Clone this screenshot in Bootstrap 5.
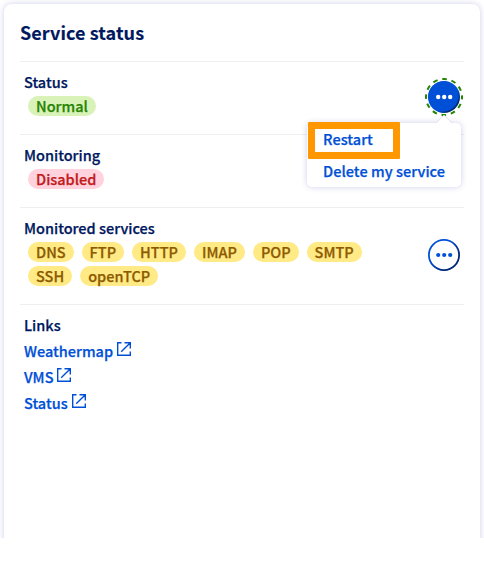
<!DOCTYPE html>
<html lang="en">
<head>
<meta charset="utf-8">
<meta name="viewport" content="width=device-width, initial-scale=1">
<title>Service status</title>
<link rel="stylesheet" href="https://cdn.jsdelivr.net/npm/bootstrap@5.3.0/dist/css/bootstrap.min.css">
<style>
body { font-family: "Noto Sans CJK SC", "Noto Sans", sans-serif; font-size: 14.5px; font-weight: 500; color: #00185e; background: #fff; -webkit-text-stroke: .25px currentColor; }
.viewport-area { height: 538px; padding: 4px 4px 0; }
.status-card { height: 560px; border: 0; border-radius: 8px; color: #00185e; padding: 0 16px; box-shadow: 0 0 6px rgba(0, 14, 156, .2); }
.card-heading { height: 57px; padding-top: 16px; font-size: 18px; letter-spacing: .08px; line-height: 24px; font-weight: 700; -webkit-text-stroke: .15px currentColor; }
.tile { border-top: 1px solid #efefef; height: 73px; padding: 8px 4px 0; }
.tile-services { height: 97px; }
.tile-name { line-height: 24px; height: 26px; }
.chips { gap: 4px 8px; padding-left: 4px; width: 350px; }
.chip { height: 20px; line-height: 20px; padding: 0 8px; border-radius: 10px; font-size: 14.5px; }
.chip-ok { background: #d9f2b8; color: #268403; }
.chip-off { background: #ffd2dd; color: #c11b1b; }
.chip-on { background: #ffea85; color: #8d5a00; }
.action { width: 32px; height: 32px; padding: 0; border: 0; background: none; display: block; }
.action svg { display: block; overflow: visible; }
.action-holder { margin-top: 11px; }
.action-services { margin-top: 23px; }
.action-menu { top: 42px; right: -1px; width: 154px; height: 64px; background: #fff; border-radius: 5px; box-shadow: 0 0 6px rgba(0, 14, 156, .2); z-index: 3; }
.menu-tip { top: -8px; right: 9px; }
.menu-entry { height: 32px; line-height: 32px; padding-left: 16px; color: #0050d7; text-decoration: none; white-space: nowrap; letter-spacing: .04px; }
.highlight-box { left: 1px; top: -1px; width: 92px; height: 37px; border: 7px solid #ff9800; border-radius: 1px; pointer-events: none; }
.link-rows .tile-name { height: 27px; }
.ext-link { height: 26px; line-height: 22px; color: #0050d7; text-decoration: none; }
.ext-link svg { margin: 1px 0 0 3px; }
</style>
</head>
<body>
<main class="viewport-area overflow-hidden">
  <section class="card status-card">
    <h1 class="card-heading m-0">Service status</h1>

    <div class="tile d-flex justify-content-between">
      <div>
        <div class="tile-name">Status</div>
        <div class="chips d-flex flex-wrap"><span class="chip chip-ok">Normal</span></div>
      </div>
      <div class="action-holder position-relative">
        <button class="action" type="button" aria-label="Status actions">
          <svg width="32" height="32" viewBox="0 0 32 32">
            <defs>
              <linearGradient id="fillShade" x1="0" y1="0" x2="1" y2="1"><stop offset=".6" stop-color="#0050d7"/><stop offset=".8" stop-color="#002b75"/></linearGradient>
            </defs>
            <circle cx="16" cy="16" r="18" fill="none" stroke="#268403" stroke-width="2" stroke-dasharray="4.7 4.725" stroke-dashoffset="2.35"/>
            <circle cx="16" cy="16" r="16" fill="url(#fillShade)"/>
            <circle cx="15.4" cy="15.4" r="15" fill="#0050d7"/>
            <g fill="#fff"><circle cx="10.2" cy="16" r="2.2"/><circle cx="16.2" cy="16" r="2.2"/><circle cx="22.2" cy="16" r="2.2"/></g>
          </svg>
        </button>
        <div class="action-menu position-absolute">
          <svg class="menu-tip position-absolute" width="16" height="9" viewBox="0 0 16 9"><path d="M0 9L8 0l8 9z" fill="#fff"/><path d="M0 8L8 0l8 8" fill="none" stroke="#dcdcf2" stroke-width=".8"/></svg>
          <a class="menu-entry d-block" href="#">Restart</a>
          <a class="menu-entry d-block" href="#">Delete my service</a>
          <div class="highlight-box position-absolute"></div>
        </div>
      </div>
    </div>

    <div class="tile">
      <div class="tile-name">Monitoring</div>
      <div class="chips d-flex flex-wrap"><span class="chip chip-off">Disabled</span></div>
    </div>

    <div class="tile tile-services d-flex justify-content-between">
      <div>
        <div class="tile-name">Monitored services</div>
        <div class="chips d-flex flex-wrap">
          <span class="chip chip-on">DNS</span><span class="chip chip-on">FTP</span><span class="chip chip-on">HTTP</span><span class="chip chip-on">IMAP</span><span class="chip chip-on">POP</span><span class="chip chip-on">SMTP</span><span class="chip chip-on">SSH</span><span class="chip chip-on">openTCP</span>
        </div>
      </div>
      <button class="action action-services" type="button" aria-label="Service actions">
        <svg width="32" height="32" viewBox="0 0 32 32">
          <defs><linearGradient id="ringShade" x1="0" y1="0" x2="1" y2="1"><stop offset=".35" stop-color="#0050d7"/><stop offset=".75" stop-color="#00257a"/></linearGradient></defs>
          <circle cx="16" cy="16" r="15.1" fill="#fff" stroke="url(#ringShade)" stroke-width="1.8"/>
          <g fill="#0050d7"><circle cx="10.2" cy="16" r="2.1"/><circle cx="16.2" cy="16" r="2.1"/><circle cx="22.2" cy="16" r="2.1"/></g>
        </svg>
      </button>
    </div>

    <div class="tile link-rows h-auto">
      <div class="tile-name">Links</div>
      <a class="ext-link d-flex" href="#">Weathermap<svg width="16" height="16" viewBox="0 0 16 16" fill="none" stroke="#0050d7" stroke-width="1.4"><path d="M5.5 1.7H1.7v12.6h12.6v-3.8M8.5 1.7h5.8v5.8M14.3 1.7L5.2 10.8"/></svg></a>
      <a class="ext-link d-flex" href="#">VMS<svg width="16" height="16" viewBox="0 0 16 16" fill="none" stroke="#0050d7" stroke-width="1.4"><path d="M5.5 1.7H1.7v12.6h12.6v-3.8M8.5 1.7h5.8v5.8M14.3 1.7L5.2 10.8"/></svg></a>
      <a class="ext-link d-flex" href="#">Status<svg width="16" height="16" viewBox="0 0 16 16" fill="none" stroke="#0050d7" stroke-width="1.4"><path d="M5.5 1.7H1.7v12.6h12.6v-3.8M8.5 1.7h5.8v5.8M14.3 1.7L5.2 10.8"/></svg></a>
    </div>
  </section>
</main>
<script src="https://cdn.jsdelivr.net/npm/bootstrap@5.3.0/dist/js/bootstrap.bundle.min.js"></script>
</body>
</html>
